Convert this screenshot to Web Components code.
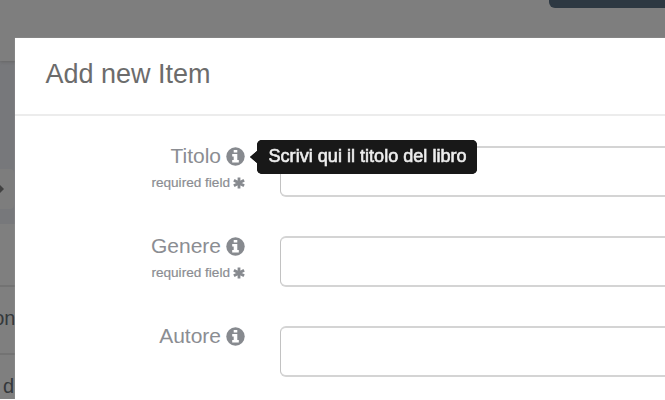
<!DOCTYPE html>
<html lang="it">
<head>
<meta charset="utf-8">
<title>Add new Item</title>
<style>
html,body{margin:0;height:100%;overflow:hidden;background:#fff;font-family:"Liberation Sans",Arial,sans-serif}
</style>
</head>
<body>
<app-screen>
  <dimmed-page slot="page"></dimmed-page>
  <item-dialog heading="Add new Item">
    <form-row label="Titolo" required tip="Scrivi qui il titolo del libro"></form-row>
    <form-row label="Genere" required></form-row>
    <form-row label="Autore"></form-row>
  </item-dialog>
</app-screen>
<script>
function define(name, html, init) {
  customElements.define(name, class extends HTMLElement {
    connectedCallback() {
      if (this.shadowRoot) return;
      this.attachShadow({mode: 'open'}).innerHTML = html;
      if (init) init(this, this.shadowRoot);
    }
  });
}

define('app-screen', `<style>
:host{display:block;position:relative;width:100%;height:399px;overflow:hidden}
::slotted(item-dialog){position:absolute;left:15px;top:38px;right:0;bottom:0}
</style><slot name="page"></slot><slot></slot>`);

define('dimmed-page', `<style>
:host{display:flex;flex-direction:column;height:100%;background:#77787b;color:#34383b;font-size:20px}
header{flex:none;height:61px;background:#7e7e7e;display:flex;justify-content:flex-end;box-shadow:0 1px 3px #666}
.button{width:116px;height:8px;background:#2d3842;border-radius:0 0 0 6px}
.gap{flex:none;height:108px}
.tab{flex:none;width:14px;height:40px;background:#7d7d7d;border-radius:0 4px 4px 0;display:flex;align-items:center}
.panel{flex:1;margin-top:15px;background:#7f7f7f;display:flex;flex-direction:column}
.row{flex:none;box-sizing:border-box;width:15.5px;border-bottom:2px solid #737373;display:flex;justify-content:flex-end;align-items:center;white-space:nowrap}
.a{height:63px}.b{height:68px;padding-bottom:4px}.c{height:62px;border:0;padding-right:1.5px}
</style>
<header><div class="button"></div></header>
<div class="gap"></div>
<div class="tab"><svg width="5" height="12" viewBox="0 0 5 12"><path d="M0 2 4 6 0 10Z" fill="#414141"/></svg></div>
<div class="panel"><div class="row a"></div><div class="row b">on</div><div class="row c">d</div></div>`);

define('item-dialog', `<style>
:host{display:flex;flex-direction:column;background:#fff;box-shadow:0 0 1px #aaa}
h1{flex:none;box-sizing:border-box;height:78px;margin:0;padding:21px 0 0 30.5px;font-size:27px;line-height:31px;font-weight:400;color:#6c6c6c;border-bottom:2px solid #ececec}
.rows{display:flex;flex-direction:column;gap:39px;padding-top:30px}
</style><h1></h1><div class="rows"><slot></slot></div>`,
(el, root) => { root.querySelector('h1').textContent = el.getAttribute('heading'); });

define('info-icon', `<style>:host{display:block;width:19px;height:19px}svg{display:block}</style>
<svg width="19" height="19" viewBox="0 0 19 19"><circle cx="9.5" cy="9.5" r="9.2" fill="#878a8f"/>
<path fill="#fff" d="M7.7 3h3.6v2.5H7.7zM6.2 7.1h5.1v6h1.5v2.3H6.2v-2.3h1.5V9.4H6.2z"/></svg>`);

define('required-icon', `<style>:host{display:block;width:12px;height:13px}svg{display:block}</style>
<svg width="12" height="13" viewBox="0 0 12 13"><path d="M6 .5v11M.9 3.2l10.2 5.6M11.1 3.2.9 8.8" stroke="#878a8f" stroke-width="2.8"/></svg>`);

define('tip-bubble', `<style>
:host{display:flex;align-items:center;filter:drop-shadow(0 0 .3px #181818)}
i{width:0;height:0;border:6.5px solid transparent;border-right:7px solid #181818;border-left:0}
span{box-sizing:border-box;width:220px;height:34px;padding-left:11.5px;border-radius:5px;background:#181818;color:#eee;font-size:18.1px;line-height:33px;white-space:nowrap;-webkit-text-stroke:.6px #eee}
</style><i></i><span><slot></slot></span>`);

define('form-row', `<style>
:host{display:grid;grid-template-columns:230px 1fr;column-gap:35px;height:51px;position:relative}
.label{display:flex;flex-direction:column;align-items:flex-end;color:#8b8d92;margin-top:-1px}
.name{display:flex;align-items:center;gap:5px;height:22px;font-size:21px;line-height:22px}
.req{display:flex;align-items:center;gap:3px;height:16px;margin-top:8px;font-size:13.6px;line-height:16px;-webkit-text-stroke:.2px #8b8d92}
.field{box-sizing:border-box;height:51px;border:solid #d4d4d4;border-width:2px 0 2px 1px;border-left-color:#c2c2c2;border-radius:6px 0 0 6px;background:#fff;margin-top:-.5px}
tip-bubble{position:absolute;left:235px;top:-6px}
</style>
<div class="label"><div class="name"><span></span><info-icon></info-icon></div></div><div class="field"></div>`,
(el, root) => {
  root.querySelector('.name span').textContent = el.getAttribute('label');
  if (el.hasAttribute('required')) {
    const r = document.createElement('div');
    r.className = 'req';
    r.innerHTML = '<span>required field</span><required-icon></required-icon>';
    root.querySelector('.label').append(r);
  }
  if (el.hasAttribute('tip')) {
    const t = document.createElement('tip-bubble');
    t.textContent = el.getAttribute('tip');
    root.append(t);
  }
});
</script>
</body>
</html>
